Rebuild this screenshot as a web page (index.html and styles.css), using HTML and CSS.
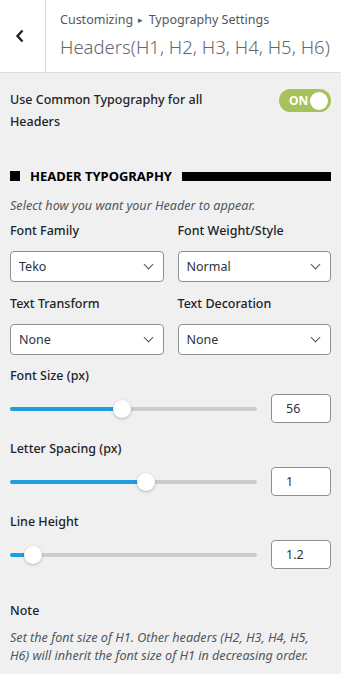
FILE: index.html
```html
<!DOCTYPE html>
<html lang="en">
  <head>
    <meta charset="UTF-8" />
    <meta name="viewport" content="width=device-width, initial-scale=1.0" />
    <title>Headers Typography</title>
    <link rel="stylesheet" href="styles.css">
  </head>

  <body>
    <div class="topbar">
      <button class="back" aria-label="Back">
        <svg width="10" height="14" viewBox="0 0 10 14">
          <path d="M7.5 1.5 L2.5 7 L7.5 12.5" fill="none" stroke="#1d2327" stroke-width="2.4" />
        </svg>
      </button>
      <div class="titles">
        <span class="crumb">Customizing <span class="arrow">▸</span> Typography Settings</span>
        <h2 class="title">Headers(H1, H2, H3, H4, H5, H6)</h2>
      </div>
    </div>

    <div class="panel">
      <!-- common toggle -->
      <div class="toggle-row">
        <span class="toggle-label">Use Common Typography for all Headers</span>
        <span class="toggle">
          <span class="toggle-text">ON</span>
          <span class="knob"></span>
        </span>
      </div>

      <h3 class="section">HEADER TYPOGRAPHY</h3>
      <p class="desc">Select how you want your Header to appear.</p>

      <div class="fields">
        <div class="field">
          <span class="label">Font Family</span>
          <div class="select">Teko<i class="caret"></i></div>
        </div>
        <div class="field">
          <span class="label">Font Weight/Style</span>
          <div class="select">Normal<i class="caret"></i></div>
        </div>
        <div class="field">
          <span class="label">Text Transform</span>
          <div class="select">None<i class="caret"></i></div>
        </div>
        <div class="field">
          <span class="label">Text Decoration</span>
          <div class="select">None<i class="caret"></i></div>
        </div>
      </div>

      <!-- sliders -->
      <div class="range">
        <span class="label">Font Size (px)</span>
        <div class="range-row">
          <div class="track">
            <div class="fill" style="width: 45.3%"></div>
            <span class="thumb" style="left: 45.3%"></span>
          </div>
          <div class="num">56</div>
        </div>
      </div>

      <div class="range">
        <span class="label">Letter Spacing (px)</span>
        <div class="range-row">
          <div class="track">
            <div class="fill" style="width: 55%"></div>
            <span class="thumb" style="left: 55%"></span>
          </div>
          <div class="num">1</div>
        </div>
      </div>

      <div class="range">
        <span class="label">Line Height</span>
        <div class="range-row">
          <div class="track">
            <div class="fill" style="width: 9.3%"></div>
            <span class="thumb" style="left: 9.3%"></span>
          </div>
          <div class="num">1.2</div>
        </div>
      </div>

      <div class="note">
        <span class="label">Note</span>
        <p class="note-text">Set the font size of H1. Other headers (H2, H3, H4, H5, H6) will inherit the font size of H1 in decreasing order.</p>
      </div>
    </div>
  </body>
</html>
```

FILE: styles.css
```css
html,
body {
  margin: 0;
  padding: 0;
  background-color: #f0f0f1;
  font-family: "Noto Sans", "Open Sans", sans-serif;
  color: #1d2327;
}

.topbar {
  display: flex;
  height: 72px;
  background: #fff;
  border-bottom: 1px solid #dcdcde;
}

.back {
  flex-shrink: 0;
  box-sizing: border-box;
  width: 46px;
  padding: 0 5px 0 0;
  border: none;
  border-right: 1px solid #dcdcde;
  background: #fff;
  display: flex;
  align-items: center;
  justify-content: center;
}

.titles {
  padding: 10px 0 0 14px;
}

.crumb {
  display: block;
  font-size: 12.5px;
  line-height: 20px;
  color: #50575e;
}

.arrow {
  margin: 0 2px;
  font-size: 9px;
  vertical-align: 1px;
}

.title {
  margin: 3px 0 0;
  font-size: 18.5px;
  font-weight: 300;
  line-height: 28px;
  color: #646970;
  white-space: nowrap;
}

.panel {
  padding: 16px 10px 0;
}

.toggle-row {
  display: flex;
  justify-content: space-between;
  align-items: flex-start;
}

.toggle-label {
  width: 220px;
  font-size: 12.5px;
  font-weight: 500;
  line-height: 22px;
}

.toggle {
  position: relative;
  width: 52px;
  height: 23px;
  border-radius: 12px;
  background: #a5c25c;
}

.toggle-text {
  position: absolute;
  left: 10px;
  top: 0;
  font-size: 12px;
  font-weight: 700;
  line-height: 23px;
  color: #fff;
}

.knob {
  position: absolute;
  right: 3px;
  top: 2.5px;
  width: 18px;
  height: 18px;
  border-radius: 50%;
  background: #fff;
}

.section {
  display: flex;
  align-items: center;
  gap: 10px;
  margin: 33px 0 0;
  font-size: 13px;
  font-weight: 700;
  line-height: 20px;
  color: #000;
}

.section::before {
  content: "";
  width: 10px;
  height: 10px;
  background: #000;
}

.section::after {
  content: "";
  flex: 1;
  height: 9px;
  background: #000;
}

.desc {
  margin: 11px 0 0;
  font-size: 12.6px;
  font-style: italic;
  line-height: 18px;
  color: #50575e;
}

.label {
  display: block;
  font-size: 12.5px;
  font-weight: 500;
  line-height: 20px;
}

.fields {
  display: grid;
  grid-template-columns: 1fr 1fr;
  column-gap: 14px;
  row-gap: 12px;
  margin-top: 6px;
}

.select {
  position: relative;
  height: 29px;
  margin-top: 10px;
  padding-left: 8px;
  border: 1px solid #8c8f94;
  border-radius: 4px;
  background: #fff;
  font-size: 12.5px;
  line-height: 29px;
  color: #2c3338;
}

.caret {
  position: absolute;
  right: 11px;
  top: 9px;
  width: 6px;
  height: 6px;
  border-right: 1.5px solid #50575e;
  border-bottom: 1.5px solid #50575e;
  transform: rotate(45deg);
}

.range {
  margin-top: 11px;
}

.range + .range {
  margin-top: 16px;
}

.range-row {
  display: flex;
  align-items: center;
  gap: 14px;
  margin-top: 8px;
}

.track {
  position: relative;
  flex: 1;
  height: 4px;
  border-radius: 2px;
  background: #cccccc;
}

.fill {
  height: 4px;
  border-radius: 2px;
  background: #1e9fdc;
}

.thumb {
  position: absolute;
  top: -7px;
  width: 18px;
  height: 18px;
  margin-left: -9px;
  border-radius: 50%;
  background: #fff;
  box-shadow: 0 1px 3px rgba(0, 0, 0, 0.25);
}

.num {
  width: 44px;
  height: 27px;
  padding-left: 14px;
  border: 1px solid #8c8f94;
  border-radius: 4px;
  background: #fff;
  font-size: 12.5px;
  line-height: 27px;
  color: #2c3338;
}

.note {
  margin-top: 32px;
}

.note-text {
  margin: 8px 0 0;
  font-size: 12.6px;
  font-style: italic;
  line-height: 18px;
  color: #50575e;
}
```
